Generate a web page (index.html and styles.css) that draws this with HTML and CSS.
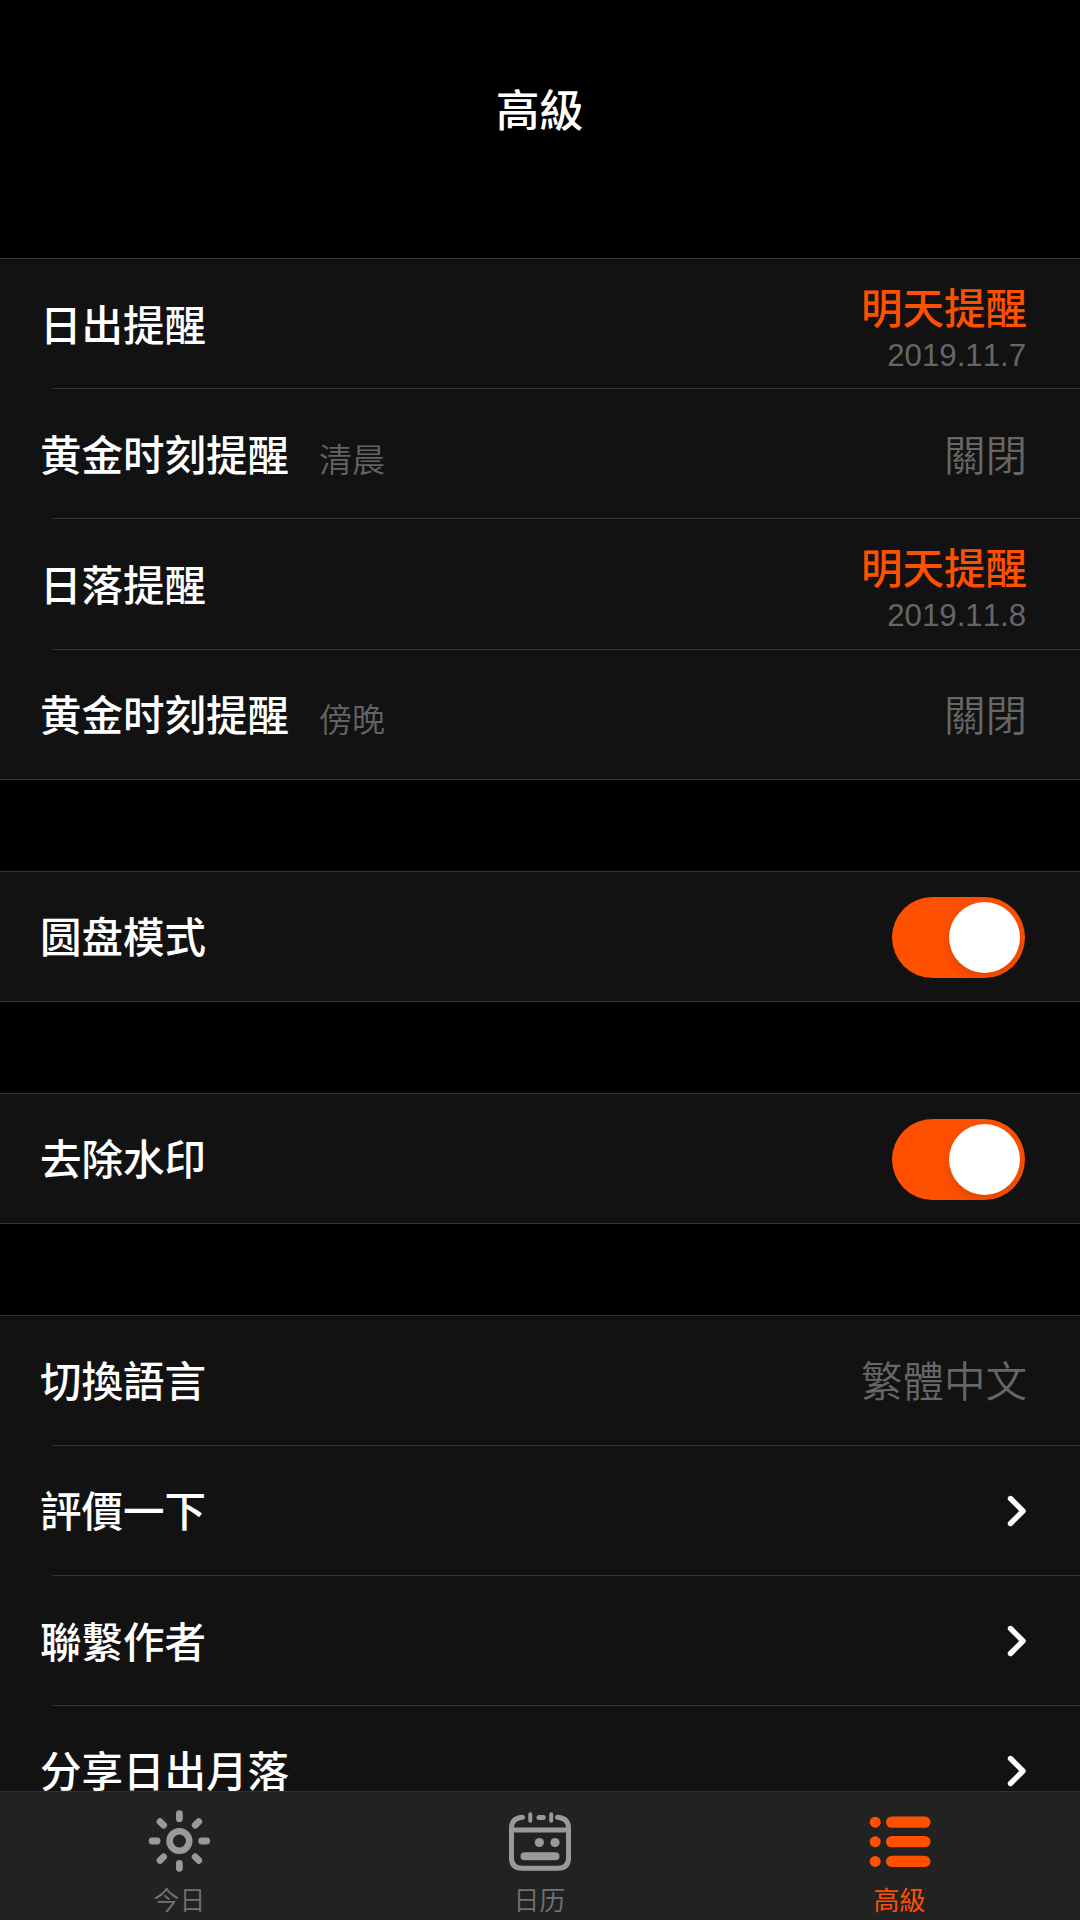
FILE: index.html
```html
<!DOCTYPE html>
<html lang="zh-Hans">
<head>
<meta charset="utf-8">
<title>高級</title>
<link rel="stylesheet" href="styles.css">
</head>
<body>
<div class="screen">
  <header class="header"><h1 class="title">高級</h1></header>
  <main class="content">
    <section class="group">
      <div class="row"><span class="label">日出提醒</span><div class="status"><span class="status-on">明天提醒</span><span class="date">2019.11.7</span></div></div>
      <div class="row"><span class="label">黄金时刻提醒</span><span class="hint">清晨</span><span class="value">關閉</span></div>
      <div class="row"><span class="label">日落提醒</span><div class="status"><span class="status-on">明天提醒</span><span class="date">2019.11.8</span></div></div>
      <div class="row"><span class="label">黄金时刻提醒</span><span class="hint">傍晚</span><span class="value">關閉</span></div>
    </section>
    <section class="group">
      <div class="row"><span class="label">圆盘模式</span><span class="switch"><span class="knob"></span></span></div>
    </section>
    <section class="group">
      <div class="row"><span class="label">去除水印</span><span class="switch"><span class="knob"></span></span></div>
    </section>
    <section class="group">
      <div class="row"><span class="label">切換語言</span><span class="value">繁體中文</span></div>
      <div class="row"><span class="label">評價一下</span><svg class="chevron" viewBox="0 0 20 32"><path d="M3.5 3.5 16 16 3.5 28.5"/></svg></div>
      <div class="row"><span class="label">聯繫作者</span><svg class="chevron" viewBox="0 0 20 32"><path d="M3.5 3.5 16 16 3.5 28.5"/></svg></div>
      <div class="row"><span class="label">分享日出月落</span><svg class="chevron" viewBox="0 0 20 32"><path d="M3.5 3.5 16 16 3.5 28.5"/></svg></div>
    </section>
  </main>
  <nav class="tabs">
    <div class="tab">
      <svg class="icon" viewBox="0 0 64 64" fill="none" stroke="currentColor" stroke-width="6.8" stroke-linecap="round">
        <circle cx="31.4" cy="32" r="9.8" stroke-width="6.6"/>
        <path d="M31.4 4.7v5M31.4 54.3v5M4.1 32h5M53.7 32h5M12 12.6l3.6 3.6M47.2 47.8l3.6 3.6M12 51.4l3.6-3.6M47.2 16.2l3.6-3.6"/>
      </svg>
      <span class="tab-name">今日</span>
    </div>
    <div class="tab">
      <svg class="icon" viewBox="0 0 64 64" fill="none" stroke="currentColor" stroke-width="5" stroke-linecap="round">
        <path d="M14.5 8.2H14Q3.500 9.500 3.500 19v30Q3.500 59.200 14 59.200H50Q60.500 59.200 60.500 49V19Q60.500 9.500 50 8.200H49.500"/>
        <path d="M4 21h56" stroke-linecap="butt"/>
        <path d="M22.3 5.200v6.600M43.200 5.200v6.600" stroke-width="4"/>
        <path d="M31 8.400h4.200"/>
        <path d="M16.5 47.200h31" stroke-width="8"/>
        <circle cx="31.300" cy="33.500" r="4.600" fill="currentColor" stroke="none"/>
        <circle cx="47" cy="33.500" r="4.600" fill="currentColor" stroke="none"/>
      </svg>
      <span class="tab-name">日历</span>
    </div>
    <div class="tab active">
      <svg class="icon" viewBox="0 0 64 64" fill="currentColor">
        <circle cx="7.2" cy="13.200" r="5.500"/><rect x="18" y="7.600" width="44.500" height="11.200" rx="5.600"/>
        <circle cx="7.2" cy="32.700" r="5.500"/><rect x="18" y="27.100" width="44.500" height="11.200" rx="5.600"/>
        <circle cx="7.2" cy="52.400" r="5.500"/><rect x="18" y="46.800" width="44.500" height="11.200" rx="5.600"/>
      </svg>
      <span class="tab-name">高級</span>
    </div>
  </nav>
</div>
</body>
</html>
```
FILE: styles.css
```css
* { box-sizing: border-box; }

body {
  margin: 0;
  background: #000;
  color: #fff;
  font-family: "Noto Sans CJK SC", sans-serif;
}

.screen {
  width: 1080px;
  height: 1920px;
  display: flex;
  flex-direction: column;
  overflow: hidden;
}

.header {
  flex: none;
  height: 258px;
  padding: 75px 1px 0 0;
  text-align: center;
}

.title {
  margin: 0;
  font-size: 43.8px;
  line-height: 66px;
  font-weight: 500;
}

.content {
  flex: 1;
  min-height: 0;
  overflow: hidden;
  display: flex;
  flex-direction: column;
  gap: 91px;
}

.group {
  flex: none;
  background: #121212;
  border-top: 1px solid #333;
  border-bottom: 1px solid #333;
}

.row {
  height: 130.2px;
  padding: 0 53px 0 40px;
  display: flex;
  align-items: center;
  background: linear-gradient(#333, #333) 52px 100% / 100% 1px no-repeat;
}

.row:last-child {
  height: 129px;
  background: none;
}

.label {
  margin-bottom: 3px;
  font-size: 41.5px;
  line-height: 60px;
  font-weight: 500;
}

.hint {
  margin: 7px 0 0 30px;
  font-size: 33.1px;
  line-height: 48px;
  font-weight: 350;
  color: #636363;
}

.value {
  margin: 0 0 3px auto;
  font-size: 41.5px;
  line-height: 60px;
  font-weight: 350;
  color: #666;
}

.status {
  margin-left: auto;
  padding-top: 3px;
  display: flex;
  flex-direction: column;
  align-items: flex-end;
}

.status-on {
  font-size: 41.5px;
  line-height: 58px;
  font-weight: 500;
  color: #ff5000;
}

.date {
  margin: 3px 1px 0 0;
  font: 31.2px/36px "Liberation Sans", sans-serif;
  font-kerning: none;
  color: #666;
}

.switch {
  width: 133px;
  height: 81px;
  margin: 3px 2px 0 auto;
  padding: 5px;
  border-radius: 41px;
  background: #ff5000;
  display: flex;
  justify-content: flex-end;
  overflow: hidden;
}

.knob {
  width: 71px;
  height: 71px;
  border-radius: 50%;
  background: #fff;
  box-shadow: 0 4px 12px rgba(0, 0, 0, 0.14);
}

.chevron {
  width: 20px;
  height: 32px;
  margin: 0 0 0 auto;
  fill: none;
  stroke: #fff;
  stroke-width: 5.4;
  stroke-linecap: round;
  stroke-linejoin: round;
}

.tabs {
  flex: none;
  height: 129px;
  display: grid;
  grid-template-columns: repeat(3, 1fr);
  background: #222;
  border-top: 1px solid #303030;
}

.tab {
  display: flex;
  flex-direction: column;
  align-items: center;
  padding-top: 17px;
  color: #999;
}

.icon {
  width: 64px;
  height: 64px;
}

.tab-name {
  margin: 7px 1px 0 0;
  font-size: 25.9px;
  line-height: 38px;
  font-weight: 350;
  color: #737373;
}

.active,
.active .tab-name {
  color: #ff5000;
}

.active .tab-name {
  font-weight: 400;
}
```
